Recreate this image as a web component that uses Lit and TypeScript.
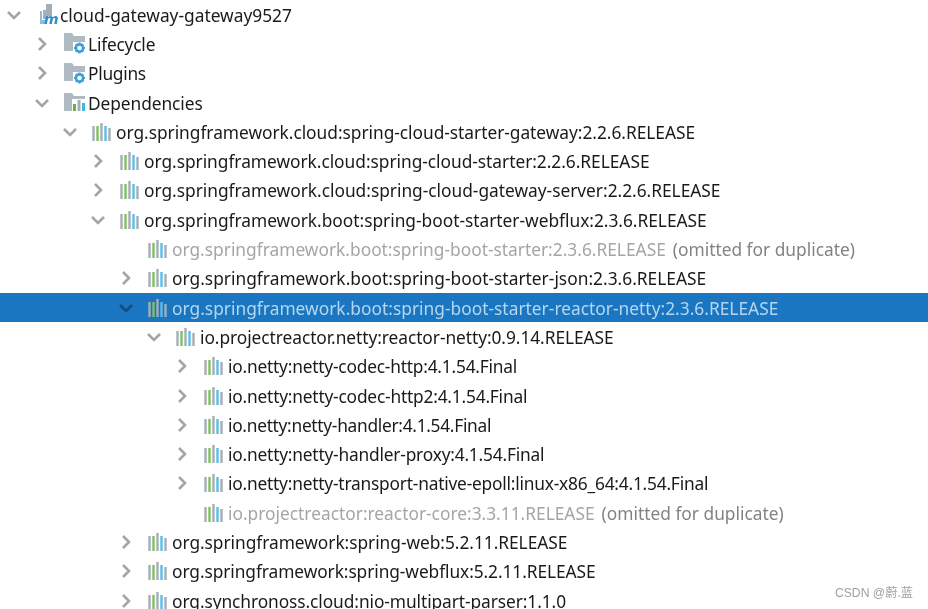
import { LitElement, html, css, svg } from "lit";
import { customElement } from "lit/decorators.js";

type Kind = "module" | "gear" | "deps" | "lib";
type Row = { l: number; a?: "o" | "c"; k: Kind; t: string; n?: string; dim?: boolean; sel?: boolean; sp?: number };

const rows: Row[] = [
  { l: 0, a: "o", k: "module", t: "cloud-gateway-gateway9527" },
  { l: 1, a: "c", k: "gear", t: "Lifecycle", sp: -0.2 },
  { l: 1, a: "c", k: "gear", t: "Plugins", sp: -0.28 },
  { l: 1, a: "o", k: "deps", t: "Dependencies", sp: -0.08 },
  { l: 2, a: "o", k: "lib", t: "org.springframework.cloud:spring-cloud-starter-gateway:2.2.6.RELEASE", sp: -0.03 },
  { l: 3, a: "c", k: "lib", t: "org.springframework.cloud:spring-cloud-starter:2.2.6.RELEASE", sp: -0.03 },
  { l: 3, a: "c", k: "lib", t: "org.springframework.cloud:spring-cloud-gateway-server:2.2.6.RELEASE", sp: -0.015 },
  { l: 3, a: "o", k: "lib", t: "org.springframework.boot:spring-boot-starter-webflux:2.3.6.RELEASE", sp: -0.015 },
  { l: 4, k: "lib", dim: true, t: "org.springframework.boot:spring-boot-starter:2.3.6.RELEASE", n: "(omitted for duplicate)" },
  { l: 4, a: "c", k: "lib", t: "org.springframework.boot:spring-boot-starter-json:2.3.6.RELEASE", sp: 0.015 },
  { l: 4, a: "o", k: "lib", sel: true, t: "org.springframework.boot:spring-boot-starter-reactor-netty:2.3.6.RELEASE", sp: 0.015 },
  { l: 5, a: "o", k: "lib", t: "io.projectreactor.netty:reactor-netty:0.9.14.RELEASE", sp: -0.06 },
  { l: 6, a: "c", k: "lib", t: "io.netty:netty-codec-http:4.1.54.Final", sp: -0.21 },
  { l: 6, a: "c", k: "lib", t: "io.netty:netty-codec-http2:4.1.54.Final", sp: -0.2 },
  { l: 6, a: "c", k: "lib", t: "io.netty:netty-handler:4.1.54.Final", sp: -0.29 },
  { l: 6, a: "c", k: "lib", t: "io.netty:netty-handler-proxy:4.1.54.Final", sp: -0.2 },
  { l: 6, a: "c", k: "lib", t: "io.netty:netty-transport-native-epoll:linux-x86_64:4.1.54.Final", sp: -0.21 },
  { l: 6, k: "lib", dim: true, t: "io.projectreactor:reactor-core:3.3.11.RELEASE", n: "(omitted for duplicate)" },
  { l: 4, a: "c", k: "lib", t: "org.springframework:spring-web:5.2.11.RELEASE", sp: -0.04 },
  { l: 4, a: "c", k: "lib", t: "org.springframework:spring-webflux:5.2.11.RELEASE", sp: -0.08 },
  { l: 4, a: "c", k: "lib", t: "org.synchronoss.cloud:nio-multipart-parser:1.1.0", sp: -0.08 },
];

const bars = svg`
  <rect x="0.3" y="3" width="2.4" height="15" fill="#a3aeb6"/>
  <rect x="4.3" y="3" width="2.4" height="15" fill="#7cc060"/>
  <rect x="8.3" y="0" width="2.4" height="18" fill="#a3aeb6"/>
  <rect x="12.3" y="3" width="2.4" height="15" fill="#5cbce8"/>
  <rect x="16.3" y="5" width="2.4" height="13" fill="#a3aeb6"/>`;

const folder = svg`<path d="M0 0h8l2 3h11v15H0z" fill="#b0bac2"/>`;

const gear = svg`
  <circle cx="15.5" cy="15" r="3.6" fill="none" stroke="#3d9fdc" stroke-width="2.6"/>
  <path d="M15.5 9.5v2.4M15.5 18.2v2.4M10 15h2.4M18.6 15H21M11.7 11.2l1.7 1.7M17.6 17.1l1.7 1.7M19.3 11.2l-1.7 1.7M13.4 17.1l-1.7 1.7" stroke="#3d9fdc" stroke-width="2"/>`;

const icons: Record<Kind, unknown> = {
  module: html`<svg class="ic" width="20" height="21" viewBox="0 0 20 21">
    <path d="M7 0h6v12H9v3H4V6h3z" fill="#a3aeb6"/>
    <path d="M1 7h2v9h4v4H1z" fill="#8fbcd6"/>
    <text x="5" y="20" class="m">m</text></svg>`,
  gear: html`<svg class="ic" width="22" height="21" viewBox="0 0 22 21">${folder}<rect x="9" y="9" width="13" height="12" fill="#fff"/>${gear}</svg>`,
  deps: html`<svg class="ic" width="22" height="19" viewBox="0 0 22 19">${folder}<rect x="8" y="6" width="14" height="13" fill="#fff"/>
    <rect x="9" y="11" width="3" height="7" fill="#62b543"/>
    <rect x="13.5" y="7" width="3" height="11" fill="#a3aeb6"/>
    <rect x="18" y="10" width="3" height="8" fill="#40b6e0"/></svg>`,
  lib: html`<svg class="ic" width="19" height="18" viewBox="0 0 19 18">${bars}</svg>`,
};

@customElement("app-root")
export class AppRoot extends LitElement {
  static styles = css`
    :host {
      display: block;
      width: 928px;
      height: 609px;
      overflow: hidden;
      background: #fff;
      position: relative;
      font-family: "Noto Sans", "Open Sans", sans-serif;
      font-size: 17.34px;
      color: #1a1a1a;
    }
    .tree { display: flex; flex-direction: column; filter: blur(0.35px); }
    .row {
      display: flex;
      align-items: center;
      height: 29.3px;
      flex: none;
      white-space: nowrap;
    }
    .row.sel { background: #1a76c0; color: #b5d6ee; }
    .row.dim { color: #a3a6a8; }
    .arrow { width: 26px; flex: none; display: flex; justify-content: center; }
    .ic { flex: none; overflow: visible; }
    .iconbox { width: 24px; flex: none; display: flex; }
    .iconbox.top { width: 21px; }
    .m { font: italic 700 14px "DejaVu Sans", sans-serif; fill: #2f8fc7; }
    .note { margin-left: 7px; color: #808386; }
    .mark {
      position: absolute;
      right: 15px;
      bottom: 8px;
      font: 12.2px "Liberation Sans", "Noto Sans CJK SC", sans-serif;
      color: #a0a0a0;
      filter: blur(0.3px);
    }
  `;

  private arrow(a?: "o" | "c", sel?: boolean) {
    const c = sel ? "#124f80" : "#a3a6a8";
    if (a === "o") return html`<svg width="16" height="16" viewBox="0 0 16 16"><path d="M2 5l6 6 6-6" fill="none" stroke=${c} stroke-width="2.6"/></svg>`;
    if (a === "c") return html`<svg width="16" height="16" viewBox="0 0 16 16"><path d="M5 2l6 6-6 6" fill="none" stroke=${c} stroke-width="2.6"/></svg>`;
    return html``;
  }

  render() {
    return html`<div class="tree">
        ${rows.map(
          (r) => html`<div class="row ${r.sel ? "sel" : ""} ${r.dim ? "dim" : ""}" style="padding-left:${1 + r.l * 28}px">
            <span class="arrow">${this.arrow(r.a, r.sel)}</span>
            <span class="iconbox ${r.l === 0 ? "top" : ""}" style="margin-left:${r.l === 0 ? 12 : 9}px">${icons[r.k]}</span>
            <span style="letter-spacing:${r.sp ?? 0}px">${r.t}</span>${r.n ? html`<span class="note">${r.n}</span>` : ""}
          </div>`
        )}
      </div>
      <div class="mark">CSDN @蔚.蓝</div>`;
  }
}
